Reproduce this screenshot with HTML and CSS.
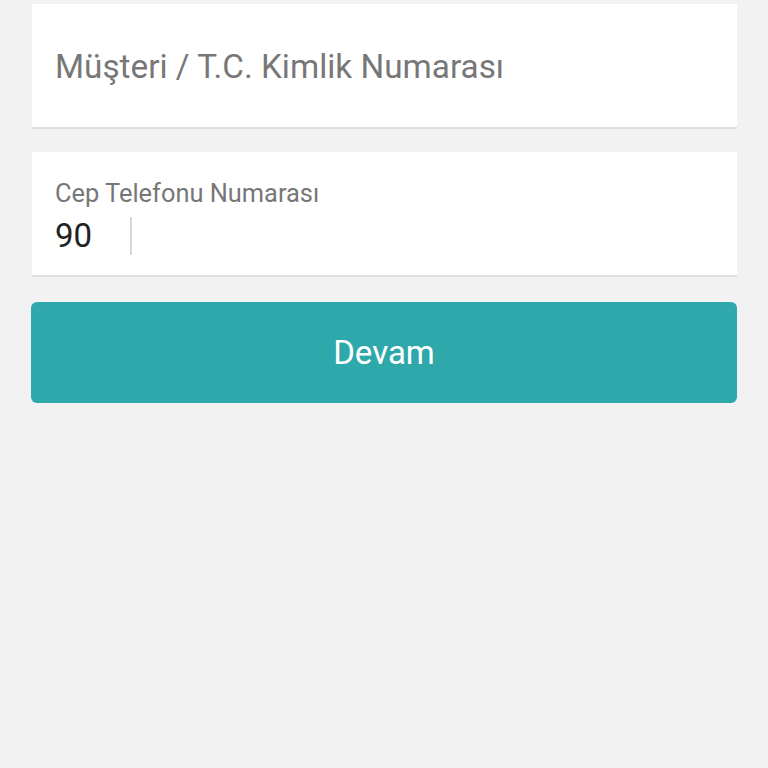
FILE: index.html
```html
<!DOCTYPE html>
<html lang="tr">
<head>
<meta charset="utf-8">
<link rel="stylesheet" href="styles.css">
</head>
<body>
<main class="form">
  <div class="field field-id">
    <span class="placeholder">Müşteri / T.C. Kimlik Numarası</span>
  </div>
  <div class="field field-phone">
    <span class="label">Cep Telefonu Numarası</span>
    <div class="phone-row">
      <span class="prefix">90</span>
      <span class="divider"></span>
    </div>
  </div>
  <button class="btn">Devam</button>
</main>
</body>
</html>
```
FILE: styles.css
```css
html, body {
  margin: 0;
  padding: 0;
  background: #f2f2f2;
  font-family: Roboto, "Noto Sans", sans-serif;
}
.form {
  display: flex;
  flex-direction: column;
  padding: 4px 31px 0 32px;
}
.field {
  background: #fff;
  border-bottom: 2px solid #dedede;
  box-sizing: border-box;
  height: 125px;
  padding-left: 23px;
  display: flex;
  flex-direction: column;
}
.field-id {
  padding-top: 43px;
}
.placeholder {
  font-size: 33.3px;
  color: #777;
  line-height: normal;
}
.field-phone {
  margin-top: 23px;
  padding-top: 26px;
}
.label {
  font-size: 25.4px;
  color: #777;
  line-height: 30px;
}
.phone-row {
  display: flex;
  align-items: center;
  margin-top: 9px;
}
.prefix {
  font-size: 33px;
  color: #222;
  line-height: 38px;
}
.divider {
  width: 2px;
  height: 38px;
  background: #d6d6d6;
  margin-left: 38px;
}
.btn {
  margin-top: 25px;
  margin-left: -1px;
  height: 101px;
  border: none;
  border-radius: 6px;
  background: #2ea8ab;
  color: #fff;
  font-family: Roboto, "Noto Sans", sans-serif;
  font-size: 33px;
  padding: 0;
}
```
